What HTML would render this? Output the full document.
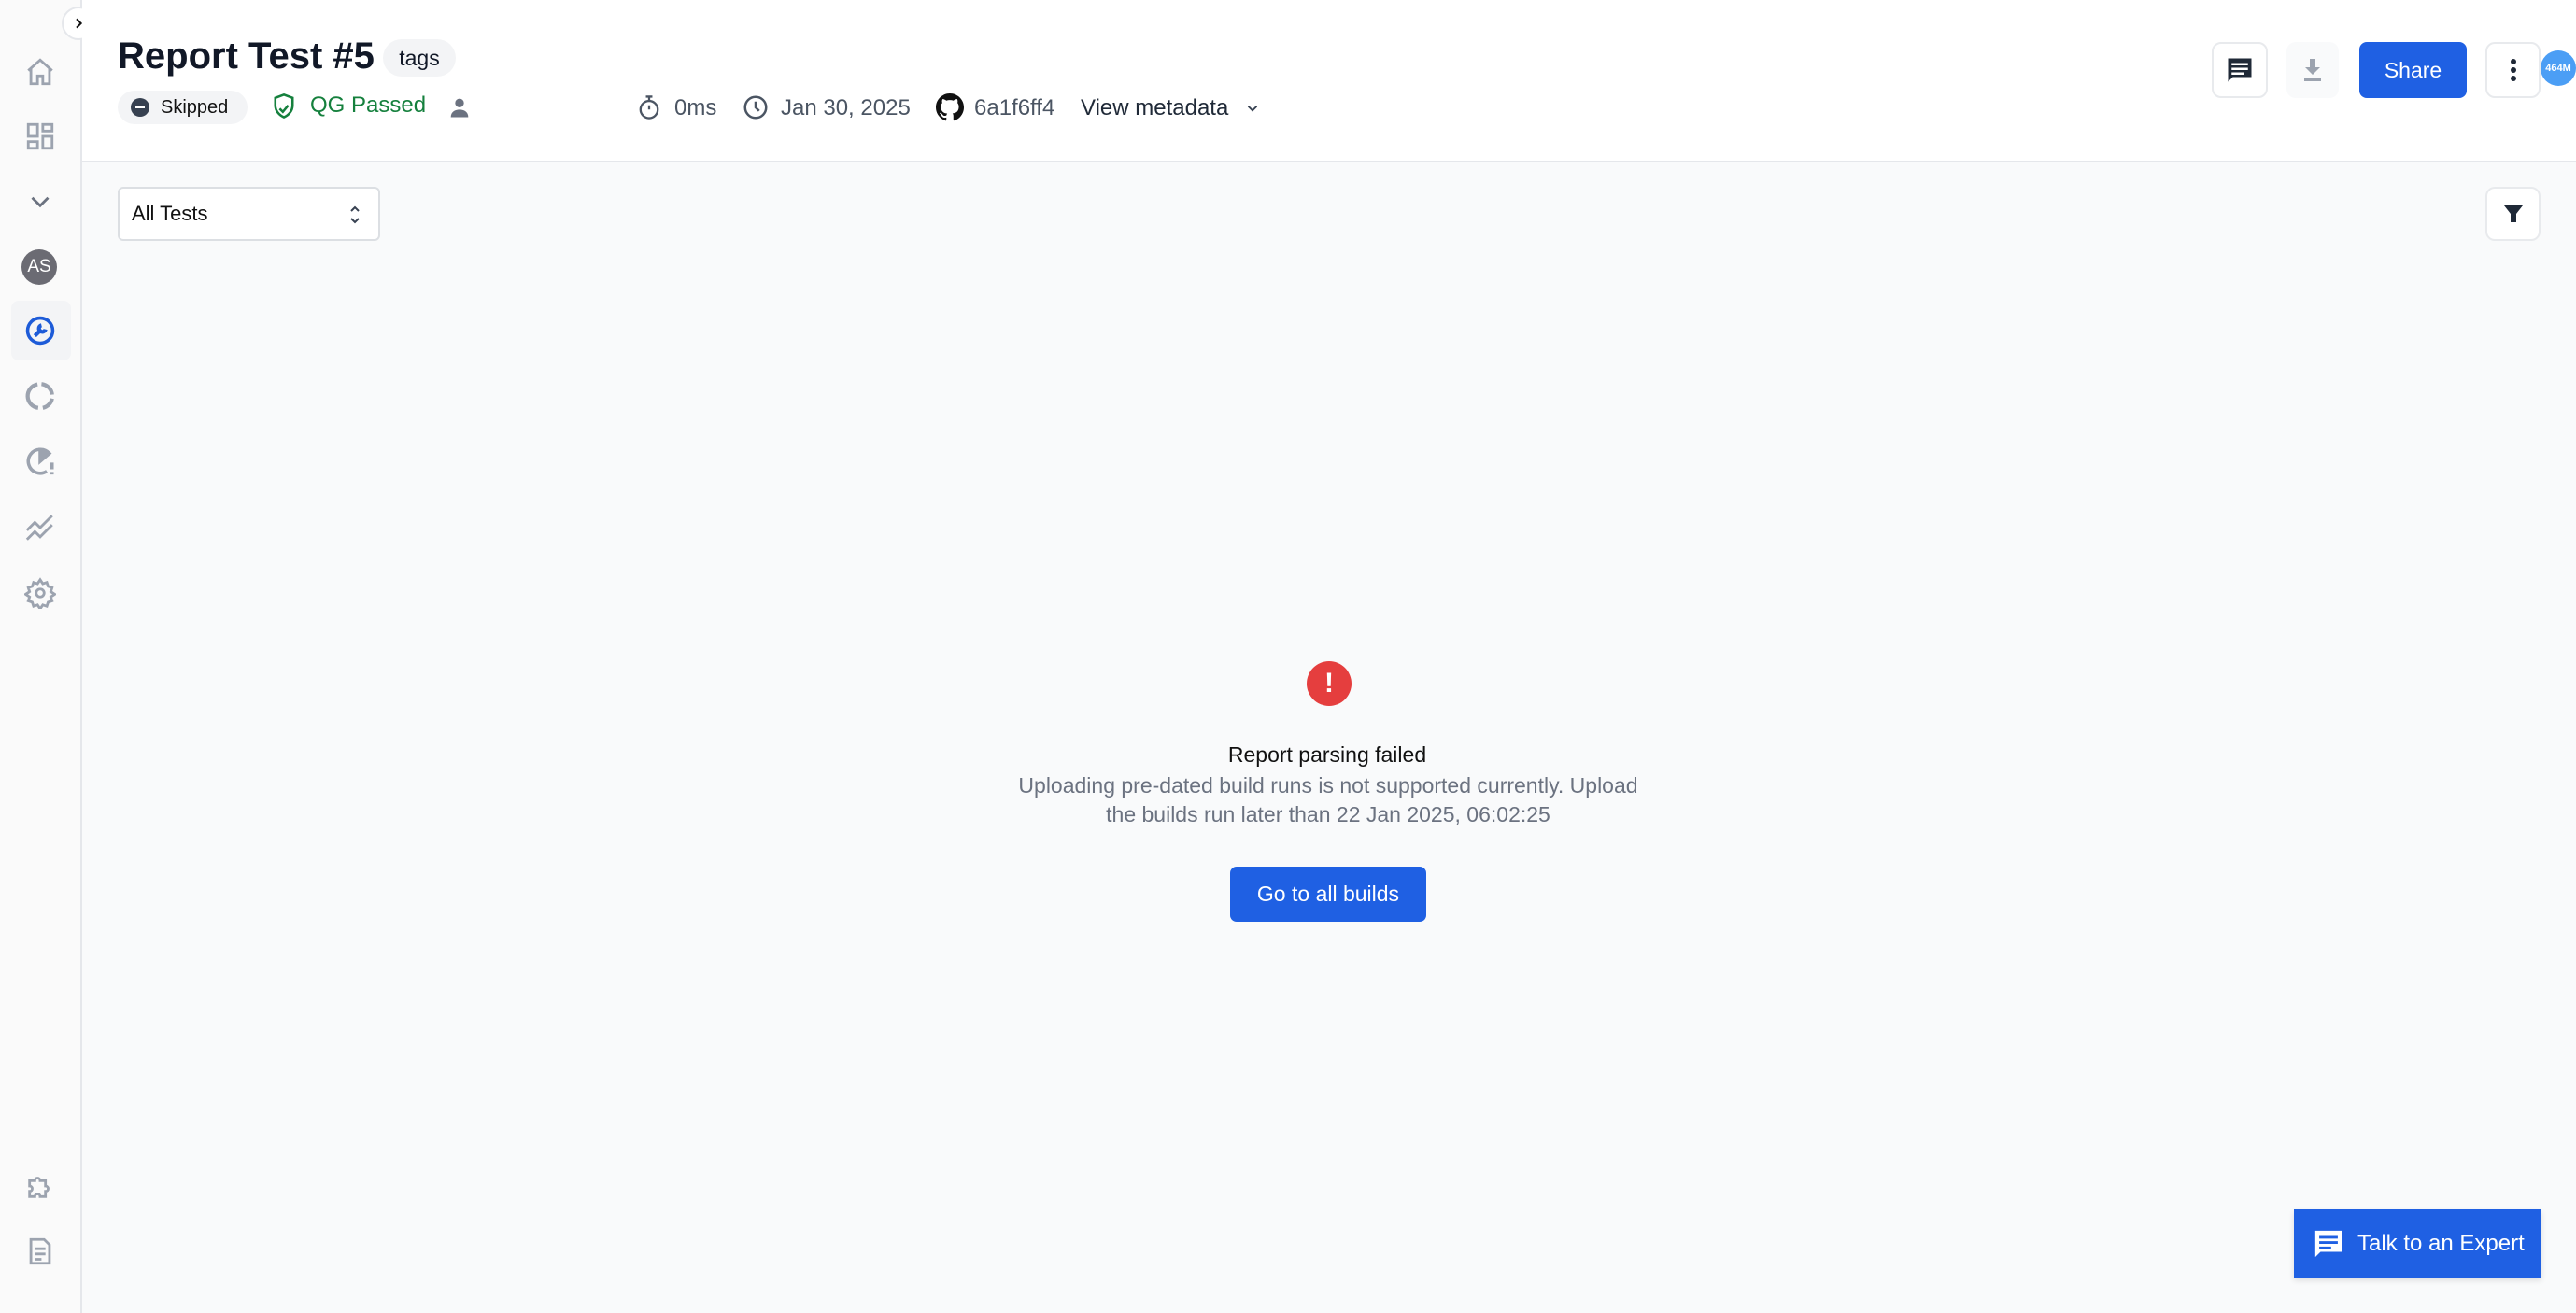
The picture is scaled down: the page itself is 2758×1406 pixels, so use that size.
<!DOCTYPE html>
<html><head><meta charset="utf-8"><style>
*{box-sizing:border-box;margin:0;padding:0}
body{width:2758px;height:1406px;overflow:hidden;background:#f9fafb;font-family:"Liberation Sans",sans-serif;position:relative;color:#111827}
.a{position:absolute}
.side{left:0;top:0;width:88px;height:1406px;background:#fafafa;border-right:2px solid #e5e7eb}
.hdr{left:88px;top:0;right:0;height:174px;background:#fff;border-bottom:2px solid #e5e7eb}
.ic{position:absolute;left:26px;width:34px;height:34px}
.t{font-size:24px;color:#4b5563;white-space:nowrap}
.btn{border:2px solid #e8eaed;border-radius:10px;background:#fff;display:flex;align-items:center;justify-content:center}
</style></head><body>
<div class="a side">
 <svg class="ic" style="top:60px" viewBox="0 0 24 24" fill="none" stroke="#9ca3af" stroke-width="2"><path d="M3 11L12 3l9 8M5 9v12h5v-6h4v6h5V9"/></svg>
 <svg class="ic" style="top:129px" viewBox="0 0 24 24" fill="none" stroke="#9ca3af" stroke-width="2"><rect x="3" y="3" width="7" height="9"/><rect x="14" y="3" width="7" height="5"/><rect x="14" y="12" width="7" height="9"/><rect x="3" y="16" width="7" height="5"/></svg>
 <svg class="ic" style="top:199px" viewBox="0 0 24 24" fill="none" stroke="#6b7280" stroke-width="2"><path d="M6 9l6 6 6-6"/></svg>
 <div class="a" style="left:23px;top:267px;width:38px;height:38px;border-radius:50%;background:#6b6b73;color:#fff;font-size:19px;display:flex;align-items:center;justify-content:center">AS</div>
 <div class="a" style="left:12px;top:322px;width:64px;height:64px;border-radius:8px;background:#f3f4f6"></div>
 <svg class="ic" style="top:337px" viewBox="0 0 24 24" fill="none" stroke="#1d5bd8" stroke-width="2.5"><circle cx="12" cy="12" r="9.5"/><path d="M8 16l5-5M13 8a2.5 2.5 0 1 0 3 3" stroke-width="3"/></svg>
 <svg class="ic" style="top:407px" viewBox="0 0 24 24" fill="none" stroke="#9ca3af" stroke-width="3"><path d="M13 3a9 9 0 0 1 8 8M21 14a9 9 0 0 1-7 7M10.5 21A9 9 0 0 1 10 3.2"/></svg>
 <svg class="ic" style="top:477px" viewBox="0 0 24 24" fill="none" stroke="#9ca3af" stroke-width="2.5"><path d="M12 3a9 9 0 1 0 5 16.5"/><path d="M12 3v9l7-6a9 9 0 0 0-7-3z" fill="#9ca3af"/><path d="M21 13v5M21 20v2"/></svg>
 <svg class="ic" style="top:548px" viewBox="0 0 24 24" fill="none" stroke="#9ca3af" stroke-width="2"><path d="M2 14l6-6 4 4 9-9M2 21l6-6 4 4 9-9"/></svg>
 <svg class="ic" style="top:618px" viewBox="0 0 24 24" fill="none" stroke="#9ca3af" stroke-width="2"><circle cx="12" cy="12" r="3"/><path d="M12 2l2 3 3-1 1 3 3 1-1 3 3 2-3 2 1 3-3 1-1 3-3-1-2 3-2-3-3 1-1-3-3-1 1-3-3-2 3-2-1-3 3-1 1-3 3 1z"/></svg>
 <svg class="ic" style="top:1253px" viewBox="0 0 24 24" fill="none" stroke="#9ca3af" stroke-width="2"><path d="M4 8h4a2 2 0 1 1 4 0h4v4a2 2 0 1 1 0 4v4h-4a2 2 0 1 0-4 0H4v-4a2 2 0 1 0 0-4z"/></svg>
 <svg class="ic" style="top:1323px" viewBox="0 0 24 24" fill="none" stroke="#9ca3af" stroke-width="2"><path d="M5 3h10l4 4v14H5z"/><path d="M8 10h8M8 14h8M8 18h5"/></svg>
</div>
<div class="a" style="left:66px;top:7px;width:36px;height:36px;border-radius:50%;background:#fff;border:2px solid #e5e7eb;display:flex;align-items:center;justify-content:center"><svg width="16" height="16" viewBox="0 0 24 24" fill="none" stroke="#111" stroke-width="3"><path d="M9 5l7 7-7 7"/></svg></div>
<div class="a hdr"></div>
<div class="a" style="left:126px;top:38px;font-size:40px;font-weight:bold;color:#111827">Report Test #5</div>
<div class="a" style="left:410px;top:42px;width:78px;height:40px;border-radius:20px;background:#f3f4f6;font-size:23px;display:flex;align-items:center;justify-content:center">tags</div>
<div class="a" style="left:126px;top:97px;width:139px;height:36px;border-radius:18px;background:#f3f4f6;display:flex;align-items:center;padding-left:14px;font-size:20px;color:#111"><span style="width:20px;height:20px;border-radius:50%;background:#374151;margin-right:12px;position:relative;display:inline-block"><span style="position:absolute;left:5px;top:9px;width:10px;height:2px;background:#fff"></span></span>Skipped</div>
<svg class="a" style="left:290px;top:99px" width="28" height="30" viewBox="0 0 24 26" fill="none" stroke="#15803d" stroke-width="2.2"><path d="M12 2l8 3v7c0 5-3.5 9-8 11-4.5-2-8-6-8-11V5z"/><path d="M8 15l3 3 5-6"/></svg>
<div class="a t" style="left:332px;top:99px;color:#15803d">QG Passed</div>
<svg class="a" style="left:478px;top:101px" width="28" height="28" viewBox="0 0 24 24" fill="#6b7280"><circle cx="12" cy="8" r="4"/><path d="M4 21c0-5 4-7 8-7s8 2 8 7z"/></svg>
<svg class="a" style="left:681px;top:100px" width="28" height="30" viewBox="0 0 24 26" fill="none" stroke="#4b5563" stroke-width="2"><circle cx="12" cy="15" r="8"/><path d="M9 3h6M12 3v4M12 11v4"/></svg>
<div class="a t" style="left:722px;top:102px">0ms</div>
<svg class="a" style="left:794px;top:100px" width="30" height="30" viewBox="0 0 24 24" fill="none" stroke="#4b5563" stroke-width="2"><circle cx="12" cy="12" r="9"/><path d="M12 7v5l3 3"/></svg>
<div class="a t" style="left:836px;top:102px">Jan 30, 2025</div>
<svg class="a" style="left:1002px;top:100px" width="30" height="30" viewBox="0 0 16 16" fill="#111"><path d="M8 0C3.6 0 0 3.6 0 8c0 3.5 2.3 6.5 5.5 7.6.4.1.5-.2.5-.4v-1.4c-2.2.5-2.7-1-2.7-1-.4-.9-.9-1.2-.9-1.2-.7-.5.1-.5.1-.5.8.1 1.2.8 1.2.8.7 1.3 1.9.9 2.3.7.1-.5.3-.9.5-1.1-1.8-.2-3.6-.9-3.6-4 0-.9.3-1.6.8-2.1-.1-.2-.4-1 .1-2.1 0 0 .7-.2 2.2.8.6-.2 1.3-.3 2-.3s1.4.1 2 .3c1.5-1 2.2-.8 2.2-.8.4 1.1.2 1.9.1 2.1.5.6.8 1.3.8 2.1 0 3.1-1.9 3.7-3.6 3.9.3.3.5.8.5 1.5v2.2c0 .2.1.5.6.4C13.7 14.5 16 11.5 16 8c0-4.4-3.6-8-8-8z"/></svg>
<div class="a t" style="left:1043px;top:102px">6a1f6ff4</div>
<div class="a t" style="left:1157px;top:102px;color:#1f2937">View metadata</div>
<svg class="a" style="left:1332px;top:107px" width="18" height="18" viewBox="0 0 24 24" fill="none" stroke="#374151" stroke-width="2.5"><path d="M6 9l6 6 6-6"/></svg>
<div class="a btn" style="left:2368px;top:45px;width:60px;height:60px"><svg width="30" height="30" viewBox="0 0 24 24" fill="#1f2937"><path d="M2 2h20v16H6l-4 4zM5 6v2h14V6zm0 4v2h14v-2zm0 4v2h11v-2z" fill-rule="evenodd"/></svg></div>
<div class="a" style="left:2448px;top:45px;width:56px;height:60px;border-radius:10px;background:#f9fafb;display:flex;align-items:center;justify-content:center"><svg width="24" height="28" viewBox="0 0 24 28" fill="#9ca3af"><path d="M9 2h6v9h5l-8 8-8-8h5zM3 23h18v3H3z"/></svg></div>
<div class="a" style="left:2526px;top:45px;width:115px;height:60px;border-radius:8px;background:#1f60e3;color:#fff;font-size:23px;display:flex;align-items:center;justify-content:center">Share</div>
<div class="a btn" style="left:2661px;top:45px;width:59px;height:60px"><svg width="8" height="26" viewBox="0 0 8 26" fill="#1f2937"><circle cx="4" cy="4" r="3"/><circle cx="4" cy="13" r="3"/><circle cx="4" cy="22" r="3"/></svg></div>
<div class="a" style="left:2720px;top:54px;width:38px;height:38px;border-radius:50%;background:#4b9ef5;color:#fff;font-size:11px;font-weight:bold;display:flex;align-items:center;justify-content:center">464M</div>
<div class="a" style="left:126px;top:200px;width:281px;height:58px;border:2px solid #dcdfe3;border-radius:6px;background:#fff;font-size:22px;color:#111;display:flex;align-items:center;padding-left:13px">All Tests<svg style="position:absolute;right:18px;top:16px" width="14" height="24" viewBox="0 0 14 24" fill="none" stroke="#374151" stroke-width="2"><path d="M3 8l4-4 4 4M3 16l4 4 4-4"/></svg></div>
<div class="a btn" style="left:2661px;top:200px;width:59px;height:58px"><svg width="24" height="24" viewBox="0 0 24 24" fill="#1f2937"><path d="M2 3h20l-7 9v9h-6v-9z"/></svg></div>
<div class="a" style="left:1399px;top:708px;width:48px;height:48px;border-radius:50%;background:#e53e3e;color:#fff;font-size:30px;font-weight:bold;display:flex;align-items:center;justify-content:center">!</div>
<div class="a" style="left:0;width:2842px;top:795px;text-align:center;font-size:23px;color:#111;font-weight:500">Report parsing failed</div>
<div class="a" style="left:1022px;width:800px;top:826px;text-align:center;font-size:23px;color:#6b7280;line-height:31px">Uploading pre-dated build runs is not supported currently. Upload<br>the builds run later than 22 Jan 2025, 06:02:25</div>
<div class="a" style="left:1317px;top:928px;width:210px;height:59px;border-radius:7px;background:#1f60e3;color:#fff;font-size:23px;display:flex;align-items:center;justify-content:center">Go to all builds</div>
<div class="a" style="left:2456px;top:1295px;width:265px;height:73px;background:#1f60e3;color:#fff;font-size:24px;display:flex;align-items:center;padding-left:20px;box-shadow:0 3px 6px rgba(0,0,0,.12)"><svg width="34" height="34" viewBox="0 0 24 24" fill="#fff" style="margin-right:14px"><path d="M2 2h20v16H6l-4 4zM5 6v2h14V6zm0 4v2h14v-2zm0 4v2h9v-2z" fill-rule="evenodd"/></svg>Talk to an Expert</div>
</body></html>
